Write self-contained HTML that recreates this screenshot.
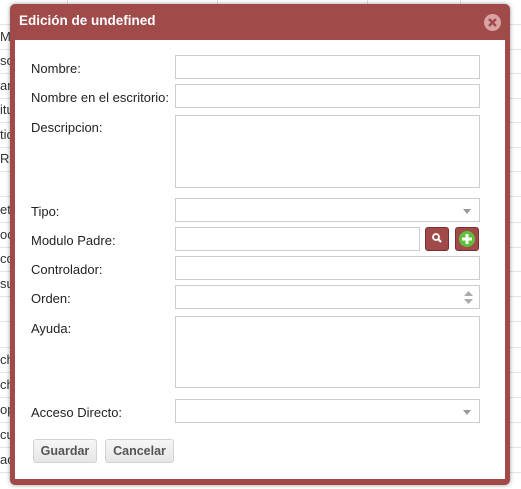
<!DOCTYPE html>
<html><head><meta charset="utf-8"><style>
*{box-sizing:border-box;margin:0;padding:0}
body{width:521px;height:489px;overflow:hidden;background:#fff;font-family:"Liberation Sans",Arial,sans-serif;position:relative}
.bg{position:absolute;left:0;top:0;width:521px;height:489px}
.row{position:absolute;left:0;width:521px;border-bottom:1px solid #e4e4e4;font-size:13px;color:#333;height:25px;line-height:24px}
.vl{position:absolute;top:0;height:24px;border-left:1px solid #ddd}
.dlg{position:absolute;left:10px;top:4px;width:500px;height:481px;background:#a04a4a;border-radius:5px;box-shadow:0 0 4px rgba(0,0,0,.4)}
.title{position:absolute;left:9px;top:9px;color:#fff;font-weight:bold;font-size:13.5px}
.close{position:absolute;left:474px;top:10px;width:17px;height:17px;border-radius:50%;background:#d9a3a3}
.body{position:absolute;left:5px;top:36px;width:490px;height:439px;background:#fff}
.lbl{position:absolute;left:31px;font-size:13px;color:#222}
.in{position:absolute;left:175px;width:305px;height:24px;border:1px solid #ccc;background:#fff}
.arr{position:absolute;right:8px;top:10px;border-left:4px solid transparent;border-right:4px solid transparent;border-top:5px solid #999}
.btn{position:absolute;top:439px;height:24px;border:1px solid #d3d3d3;border-radius:3px;background:linear-gradient(#f6f6f6,#e6e6e6);color:#555;font-weight:bold;font-size:12.5px;text-align:center;line-height:22px}
.ib{position:absolute;top:227px;width:24px;height:24px;border:1px solid #7a2e2e;border-radius:3px;background:#a04a4a}
</style></head><body>
<div class="bg">
<div class="row" style="top:0"><span class="vl" style="left:67px"></span><span class="vl" style="left:217px"></span><span class="vl" style="left:367px"></span><span class="vl" style="left:460px"></span></div>
<div class="row" style="top:25px">Mo</div>
<div class="row" style="top:49px">so</div>
<div class="row" style="top:74px">an</div>
<div class="row" style="top:98px">itu</div>
<div class="row" style="top:123px">tic</div>
<div class="row" style="top:147px">Re</div>
<div class="row" style="top:172px"></div>
<div class="row" style="top:198px">et</div>
<div class="row" style="top:223px">oc</div>
<div class="row" style="top:247px">cc</div>
<div class="row" style="top:272px">su</div>
<div class="row" style="top:297px"></div>
<div class="row" style="top:323px"></div>
<div class="row" style="top:348px">ch</div>
<div class="row" style="top:373px">ch</div>
<div class="row" style="top:398px">op</div>
<div class="row" style="top:423px">cu</div>
<div class="row" style="top:448px">ac</div>
</div>
<div class="dlg">
<div class="title">Edición de undefined</div>
<div class="close"><svg width="17" height="17"><path d="M5 5L12 12M12 5L5 12" stroke="#a04a4a" stroke-width="2.4"/></svg></div>
<div class="body"></div>
</div>
<div class="lbl" style="top:61px">Nombre:</div>
<div class="in" style="top:55px"></div>
<div class="lbl" style="top:90px">Nombre en el escritorio:</div>
<div class="in" style="top:84px"></div>
<div class="lbl" style="top:120px">Descripcion:</div>
<div class="in" style="top:115px;height:73px"></div>
<div class="lbl" style="top:204px">Tipo:</div>
<div class="in" style="top:198px"><span class="arr"></span></div>
<div class="lbl" style="top:233px">Modulo Padre:</div>
<div class="in" style="top:227px;width:245px"></div>
<div class="ib" style="left:425px"><svg width="22" height="22"><circle cx="10" cy="9" r="3" fill="none" stroke="#fff" stroke-width="1.8"/><path d="M12 11L15 14" stroke="#fff" stroke-width="2.2"/></svg></div>
<div class="ib" style="left:455px"><svg width="22" height="22"><circle cx="11" cy="11" r="8" fill="#5cc23a"/><path d="M11 6V16M6 11H16" stroke="#fff" stroke-width="3"/></svg></div>
<div class="lbl" style="top:262px">Controlador:</div>
<div class="in" style="top:256px"></div>
<div class="lbl" style="top:291px">Orden:</div>
<div class="in" style="top:285px"><svg style="position:absolute;right:6px;top:5px" width="9" height="13"><path d="M0 5L4.5 0L9 5Z M0 8L4.5 13L9 8Z" fill="#aaa"/></svg></div>
<div class="lbl" style="top:321px">Ayuda:</div>
<div class="in" style="top:316px;height:72px"></div>
<div class="lbl" style="top:405px">Acceso Directo:</div>
<div class="in" style="top:399px"><span class="arr"></span></div>
<div class="btn" style="left:33px;width:64px">Guardar</div>
<div class="btn" style="left:105px;width:69px">Cancelar</div>
</body></html>
